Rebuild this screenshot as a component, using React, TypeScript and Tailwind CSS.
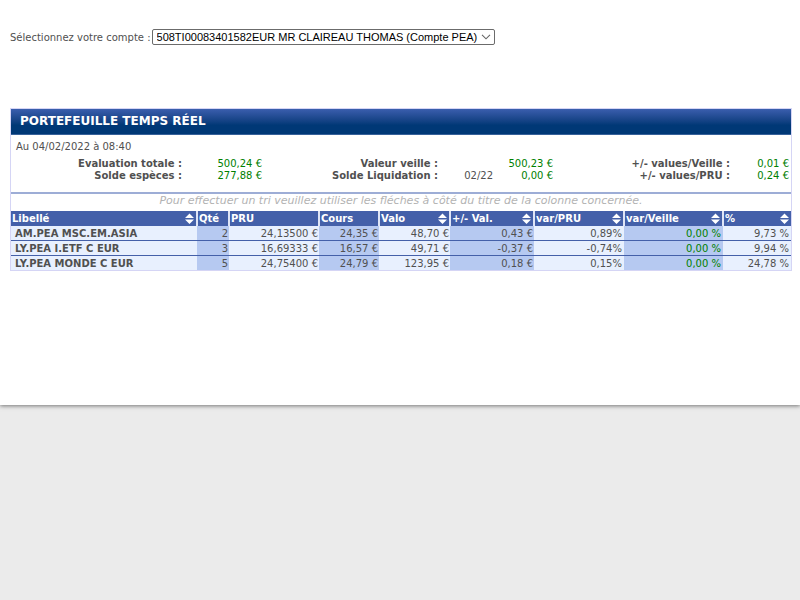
type Column = { label: string; width: string; sortable: boolean };

const columns: Column[] = [
  { label: "Libellé", width: "w-[186px]", sortable: true },
  { label: "Qté", width: "w-[32px]", sortable: false },
  { label: "PRU", width: "w-[90px]", sortable: false },
  { label: "Cours", width: "w-[60px]", sortable: false },
  { label: "Valo", width: "w-[71px]", sortable: true },
  { label: "+/- Val.", width: "w-[84px]", sortable: true },
  { label: "var/PRU", width: "w-[90px]", sortable: true },
  { label: "var/Veille", width: "w-[99px]", sortable: true },
  { label: "%", width: "w-[68px]", sortable: true },
];

const rows: string[][] = [
  ["AM.PEA MSC.EM.ASIA", "2", "24,13500 €", "24,35 €", "48,70 €", "0,43 €", "0,89%", "0,00 %", "9,73 %"],
  ["LY.PEA I.ETF C EUR", "3", "16,69333 €", "16,57 €", "49,71 €", "-0,37 €", "-0,74%", "0,00 %", "9,94 %"],
  ["LY.PEA MONDE C EUR", "5", "24,75400 €", "24,79 €", "123,95 €", "0,18 €", "0,15%", "0,00 %", "24,78 %"],
];

function SortButton({ label }: { label: string }) {
  return (
    <button type="button" aria-label={"Trier par " + label} className="block shrink-0">
      <svg width="9" height="11" viewBox="0 0 9 11" className="block">
        <path d="M4.5 0.5 9 5H0ZM0 6.5H9L4.5 11Z" fill="#fff" />
      </svg>
    </button>
  );
}

function Summary() {
  return (
    <dl className="grid h-[34px] grid-cols-[171px_80px_176px_55px_60px_177px_1fr] content-start text-right text-[10px] leading-[12px]">
      <dt className="font-bold">Evaluation totale :</dt>
      <dd className="text-[#008000]">500,24 €</dd>
      <dt className="font-bold">Valeur veille :</dt>
      <dd className="col-span-2 text-[#008000]">500,23 €</dd>
      <dt className="font-bold">+/- values/Veille :</dt>
      <dd className="pr-[2px] text-[#008000]">0,01 €</dd>
      <dt className="font-bold">Solde espèces :</dt>
      <dd className="text-[#008000]">277,88 €</dd>
      <dt className="font-bold">Solde Liquidation :</dt>
      <dd>02/22</dd>
      <dd className="text-[#008000]">0,00 €</dd>
      <dt className="font-bold">+/- values/PRU :</dt>
      <dd className="pr-[2px] text-[#008000]">0,24 €</dd>
    </dl>
  );
}

function Positions() {
  return (
    <table className="w-full table-fixed border-collapse text-[10px]">
      <thead>
        <tr className="h-[15px] bg-[#4460a9] leading-[15px] text-white">
          {columns.map((c, i) => (
            <th
              key={c.label}
              className={
                c.width + " p-0 text-left font-bold " + (i > 0 ? "border-l-2 border-[#dfe5f6]" : "")
              }
            >
              <div className="flex h-[15px] items-center justify-between pl-px pr-[2px]">
                <span className="whitespace-nowrap">{c.label}</span>
                {c.sortable && <SortButton label={c.label} />}
              </div>
            </th>
          ))}
        </tr>
      </thead>
      <tbody>
        {rows.map((row, r) => (
          <tr
            key={row[0]}
            className={"leading-[12px] " + (r < rows.length - 1 ? "border-b border-[#4460a9]" : "")}
          >
            {row.map((value, i) => (
              <td
                key={columns[i].label}
                className={
                  "whitespace-nowrap pt-[2px] " +
                  (i === 0 ? "pl-1 text-left font-bold " : i > 5 ? "pr-[2px] text-right " : "pr-px text-right ") +
                  (i % 2 === 1 ? "bg-[#b6c9f1] " : "bg-[#e8f0fe] ") +
                  (i === 7 ? "text-[#008000]" : "")
                }
              >
                {value}
              </td>
            ))}
          </tr>
        ))}
      </tbody>
    </table>
  );
}

export default function App() {
  return (
    <div className="min-h-screen bg-[#ebebeb] font-['Verdana','DejaVu_Sans',sans-serif] text-[#505050]">
      <main className="bg-white px-[10px] pb-[134px] pt-[29px] shadow-[0_1px_4px_rgba(0,0,0,0.5)]">
        <div className="flex h-4 items-center text-[10px]">
          <label htmlFor="compte" className="whitespace-nowrap">
            Sélectionnez votre compte :
          </label>
          <div className="relative ml-px">
            <select
              id="compte"
              className="block h-4 w-[343px] appearance-none rounded-[2px] border border-[#6b6b6b] bg-white pl-1 font-['Liberation_Sans',Arial,sans-serif] text-[11px] leading-[14px] text-black"
            >
              <option>508TI00083401582EUR MR CLAIREAU THOMAS (Compte PEA)</option>
            </select>
            <svg
              width="10"
              height="6"
              viewBox="0 0 10 6"
              className="pointer-events-none absolute right-1 top-[5px]"
            >
              <path d="M1 0.8 5 4.8 9 0.8" fill="none" stroke="#666" strokeWidth="1.1" />
            </svg>
          </div>
        </div>

        <section className="mr-[-2px] mt-[63px] border border-[#d5d5f5]">
          <h1 className="h-[26px] border-b border-[#37619a] bg-gradient-to-b from-[#3a5eae] from-0% to-[#003876] to-65% pl-[9px] text-[12px] font-bold leading-[25px] text-white">
            PORTEFEUILLE TEMPS RÉEL
          </h1>
          <p className="pb-[3px] pl-[5px] pt-1 text-[10px] leading-[16px]">Au 04/02/2022 à 08:40</p>
          <Summary />
          <p className="h-[19px] border-t-2 border-[#9dadd6] text-center text-[11px] italic leading-[13px] text-[#b3b3b3]">
            Pour effectuer un tri veuillez utiliser les fléches à côté du titre de la colonne concernée.
          </p>
          <Positions />
        </section>
      </main>
    </div>
  );
}
